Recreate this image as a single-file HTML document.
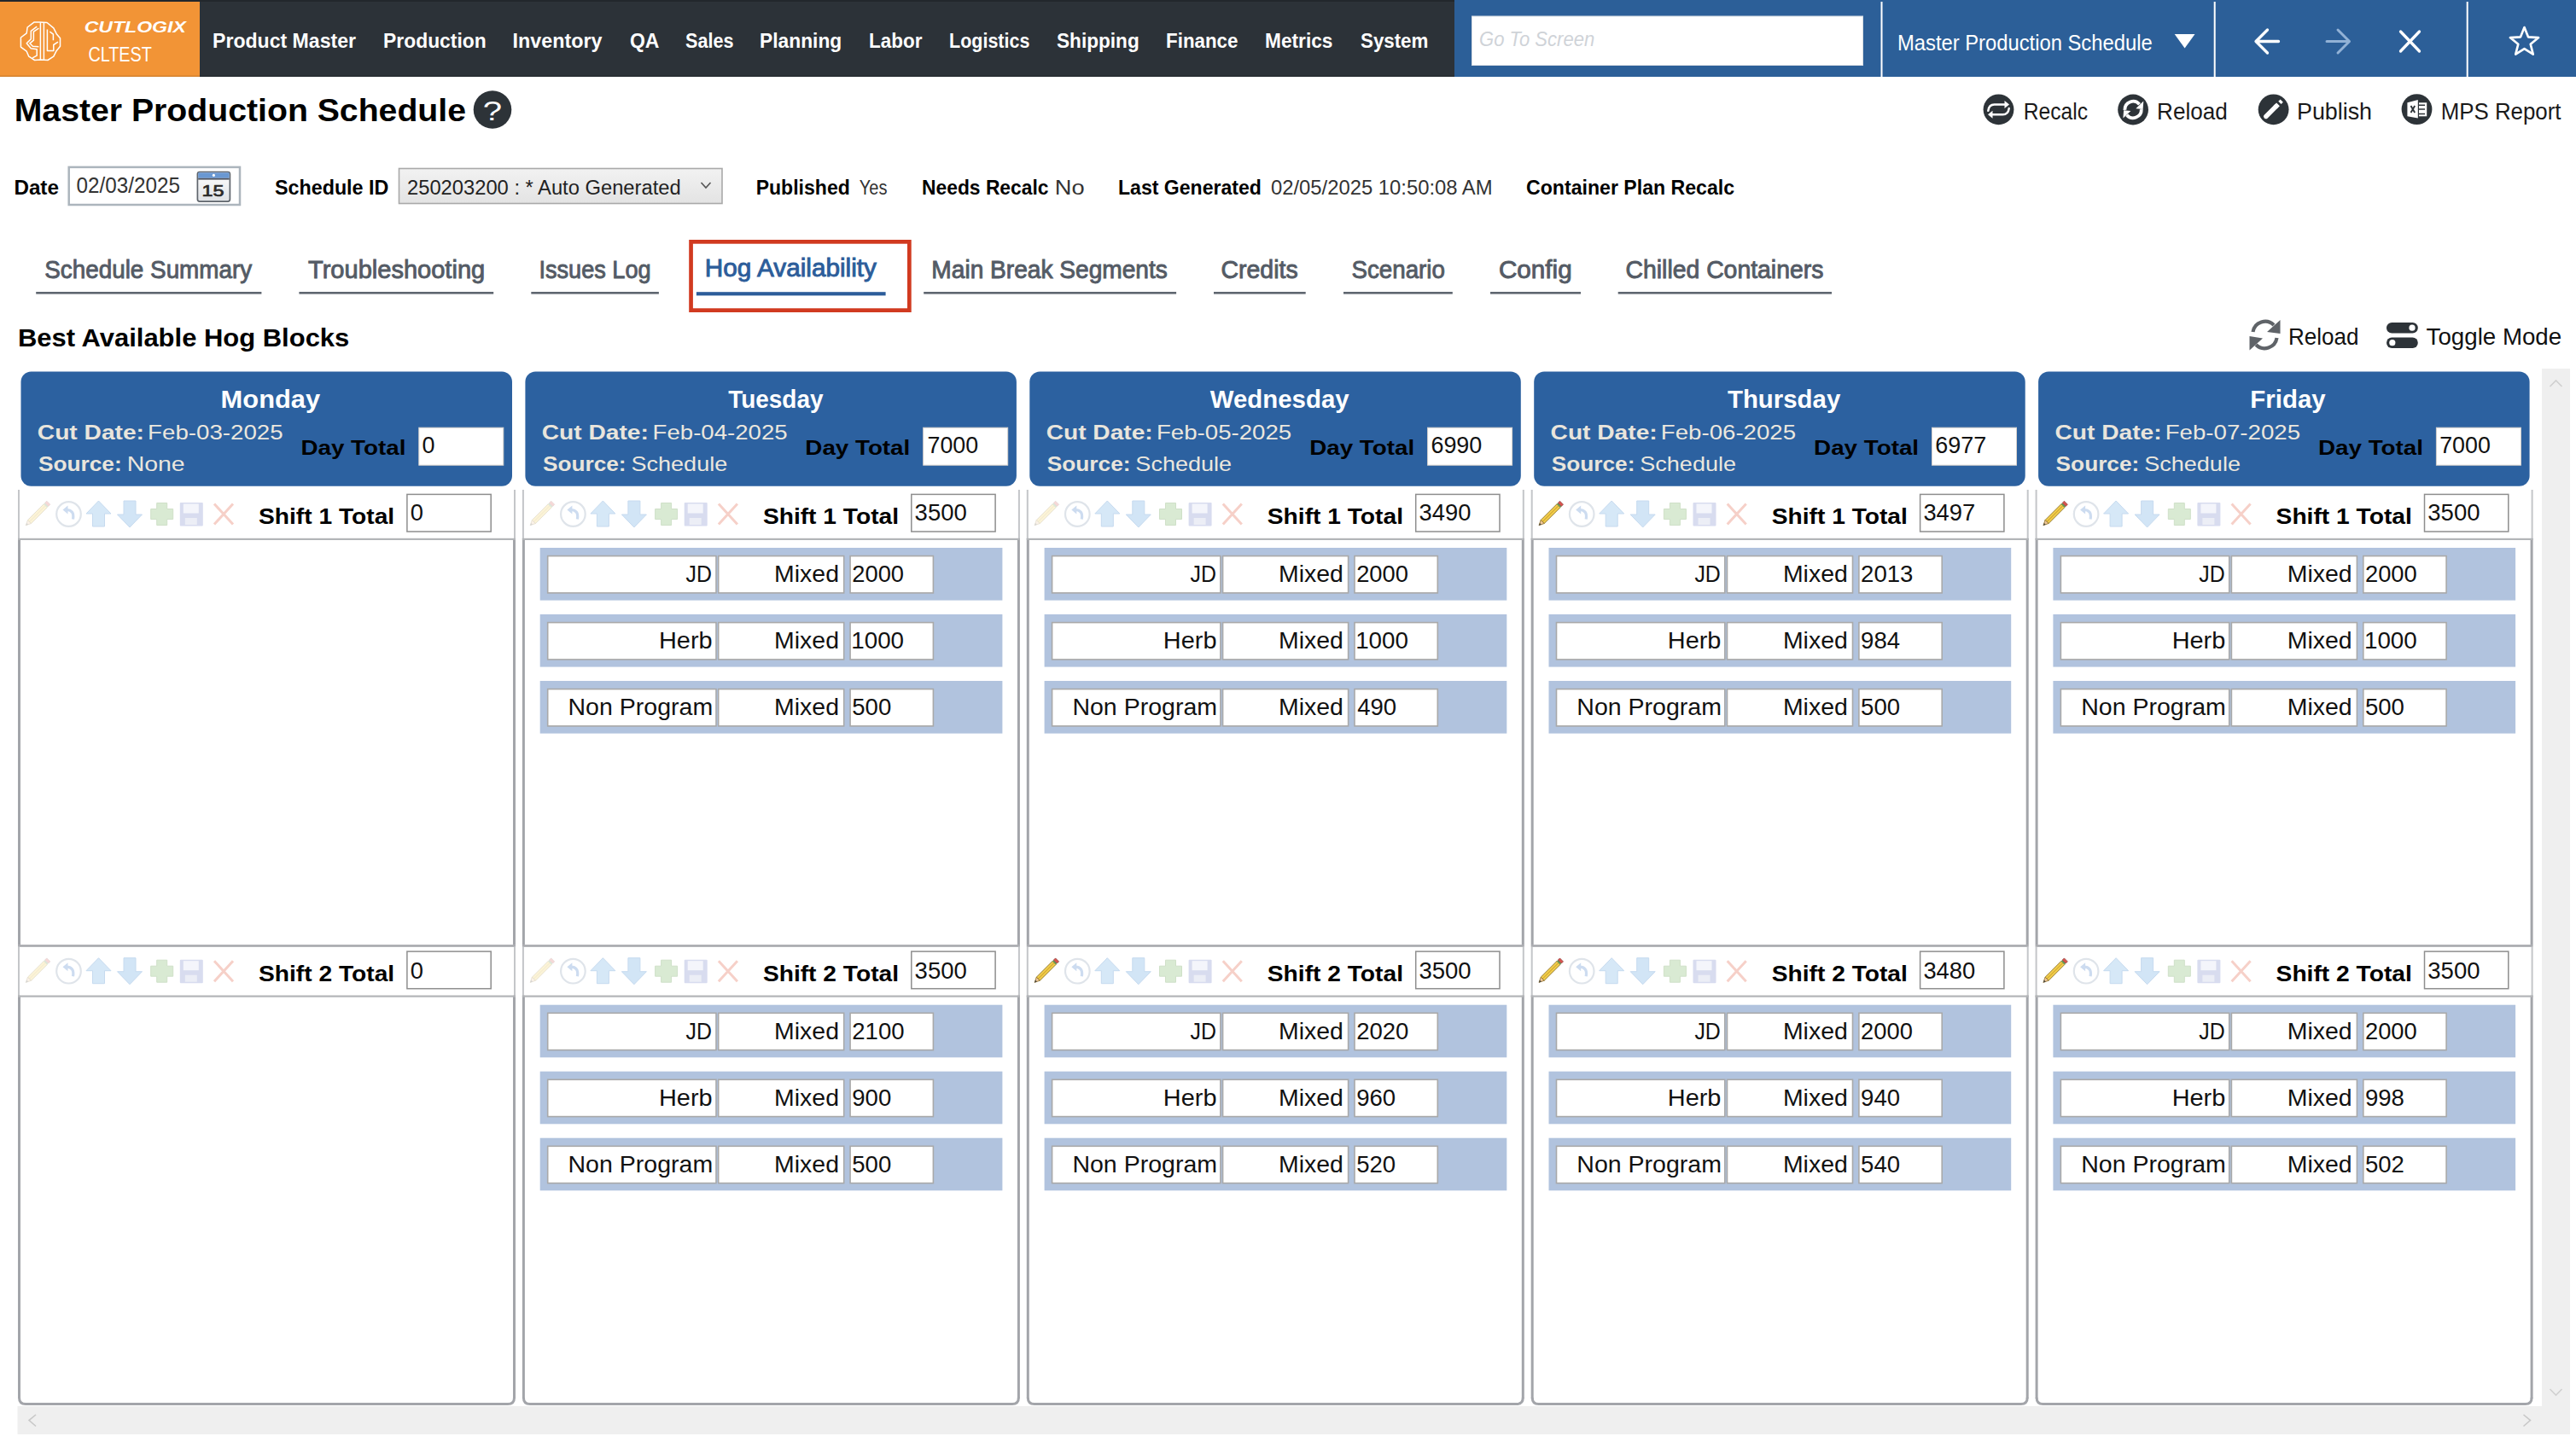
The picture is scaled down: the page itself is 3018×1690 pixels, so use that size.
<!DOCTYPE html>
<html><head><meta charset="utf-8"><title>Master Production Schedule</title>
<style>html,body{margin:0;padding:0;background:#fff;overflow:hidden}svg{display:block}text{font-family:"Liberation Sans",sans-serif;white-space:pre}</style>
</head><body>
<svg width="3018" height="1690" viewBox="0 0 3018 1690">
<rect width="3018" height="1690" fill="#fff"/>
<rect x="0" y="0" width="1704" height="90" fill="#2c3238"/>
<rect x="0" y="2" width="234" height="88" fill="#f29436"/>
<rect x="0" y="0" width="1704" height="2" fill="#22272c"/>
<rect x="0" y="88.5" width="3018" height="1.5" fill="#000" opacity="0.12"/>
<rect x="1704" y="0" width="1314" height="90" fill="#2c5f98"/>
<g fill="none" stroke="#fff" stroke-width="1.5" stroke-linejoin="round"><polygon points="39.8,26.1 46.6,26.1 55.1,26.5 62.8,32.9 66.2,39.7 70.5,44.8 70.5,54.2 66.2,59.4 62.8,66.2 56.0,70.5 47.4,70.0 40.6,70.5 33.8,66.2 31.2,60.2 24.4,55.1 24.4,44.0 31.2,38.9 32.1,32.0"/><polyline points="47.4,26.2 47.4,70.0"/><polyline points="51.4,26.5 51.4,70.0"/><polyline points="43.2,31.2 36.3,36.3 36.3,45.7 31.2,50.8 36.3,56.8 43.2,57.7 43.2,65.2 38.1,67.9"/><polyline points="45.4,33.2 39.4,37.2 39.4,47.2 34.9,50.8 38.4,54.2 45.4,54.7"/><polyline points="55.4,34.6 55.4,59.4 62.8,59.4 62.8,52.5 68.0,49.1"/><polyline points="58.4,37.2 62.4,40.2 62.4,47.2"/></g>
<rect x="1724.5" y="19" width="458" height="57.5" fill="#fff" stroke="#d8dde3" stroke-width="1"/>
<rect x="2203.5" y="2" width="2" height="88" fill="#fff"/>
<rect x="2593.7" y="2" width="2" height="88" fill="#fff"/>
<rect x="2889.7" y="2" width="2" height="88" fill="#fff"/>
<path d="M2547.7 40 L2571.5 40 L2559.6 56.5 Z" fill="#fff"/>
<g stroke="#fff" stroke-width="3.3" fill="none" stroke-linecap="round" stroke-linejoin="round"><path d="M2643 48.5 L2669.5 48.5 M2656.5 35 L2643 48.5 L2656.5 62"/></g>
<g stroke="#92b2d6" stroke-width="3" fill="none" stroke-linecap="round" stroke-linejoin="round"><path d="M2726 48.5 L2752.5 48.5 M2739 35 L2752.5 48.5 L2739 62"/></g>
<g stroke="#fff" stroke-width="3.3" fill="none" stroke-linecap="round"><path d="M2812.5 37 L2834.5 60 M2834.5 37 L2812.5 60"/></g>
<polygon points="2957.50,32.00 2961.97,43.35 2974.14,44.09 2964.73,51.85 2967.79,63.66 2957.50,57.10 2947.21,63.66 2950.27,51.85 2940.86,44.09 2953.03,43.35" fill="none" stroke="#fff" stroke-width="2.6" stroke-linejoin="round"/>
<circle cx="577" cy="128.5" r="22.3" fill="#2d3338"/>
<circle cx="2341.5" cy="128.3" r="17.9" fill="#2d3338"/><g fill="none" stroke="#fff" stroke-width="2.5" stroke-linecap="round"><path d="M2329.3 129.8 Q2330.3 122.60000000000001 2336.5 122.60000000000001 L2349.0 122.60000000000001"/><path d="M2353.7 127.10000000000001 Q2352.7 134.3 2346.5 134.3 L2334.0 134.3"/></g><path d="M2348.5 118.10000000000001 L2354.0 122.60000000000001 L2348.5 127.10000000000001 Z M2334.5 129.8 L2329.0 134.3 L2334.5 138.8 Z" fill="#fff"/>
<circle cx="2499.1" cy="128.5" r="17.9" fill="#2d3338"/><g fill="none" stroke="#fff" stroke-width="3.8"><path d="M2489.41 128.84 A9.7 9.7 0 0 1 2506.53 122.26"/><path d="M2508.79 128.16 A9.7 9.7 0 0 1 2491.67 134.74"/></g><path d="M2511.2999999999997 118.5 L2510.6 128.0 L2502.2999999999997 127.3 Z M2487.4 138.5 L2488.1 129.3 L2496.4 130.0 Z" fill="#fff"/>
<circle cx="2663.6" cy="128.3" r="17.9" fill="#2d3338"/><path d="M2654.7999999999997 136.5 L2666.6 124.70000000000002" stroke="#fff" stroke-width="5.4" stroke-linecap="round"/><path d="M2665.6 125.70000000000002 L2669.0 122.30000000000001" stroke="#fff" stroke-width="5.4" stroke-linecap="butt"/><path d="M2670.9 120.4 L2673.2 118.10000000000001" stroke="#fff" stroke-width="4.6" stroke-linecap="butt"/>
<circle cx="2831.5" cy="128.1" r="17.9" fill="#2d3338"/><path d="M2820.4 120.3 L2832.8 117.1 L2832.8 138.6 L2820.4 136.29999999999998 Z" fill="#fff"/><path d="M2824.5 124.1 L2829.2 132.1 M2829.2 124.1 L2824.5 132.1" stroke="#2d3338" stroke-width="1.9"/><rect x="2834.0" y="120.3" width="9.2" height="16" fill="#fff"/><path d="M2834.0 123.3 H2841.0 M2834.0 128.1 H2841.0 M2834.0 133.4 H2841.0" stroke="#2d3338" stroke-width="1.5"/>
<rect x="80.7" y="195.9" width="200.3" height="44.1" fill="#fff" stroke="#acb5bd" stroke-width="2.5"/>
<g><defs><linearGradient id="calg" x1="0" y1="0" x2="0" y2="1"><stop offset="0" stop-color="#ffffff"/><stop offset="1" stop-color="#dfe2e6"/></linearGradient></defs><rect x="231.4" y="201.5" width="38" height="34.6" rx="2.5" fill="url(#calg)" stroke="#5f656c" stroke-width="1.7"/>
<rect x="232.2" y="202.3" width="36.4" height="6.5" fill="#6a98d2"/>
<rect x="232.2" y="208.8" width="36.4" height="1.8" fill="#505560"/>
<circle cx="250.4" cy="205.4" r="1.6" fill="#fff"/></g>
<defs><linearGradient id="selg" x1="0" y1="0" x2="0" y2="1"><stop offset="0" stop-color="#f2f2f2"/><stop offset="1" stop-color="#e3e3e3"/></linearGradient></defs>
<rect x="467.5" y="197.5" width="378.5" height="41" fill="url(#selg)" stroke="#a9a9a9" stroke-width="1.6"/>
<path d="M821.5 214 L827 220 L832.5 214" fill="none" stroke="#555" stroke-width="1.6"/>
<rect x="42.2" y="342" width="264.2" height="2.6" fill="#5f6670"/>
<rect x="350.4" y="342" width="227.80000000000007" height="2.6" fill="#5f6670"/>
<rect x="622.3" y="342" width="149.60000000000002" height="2.6" fill="#5f6670"/>
<rect x="1082.2" y="342" width="295.89999999999986" height="2.6" fill="#5f6670"/>
<rect x="1422" y="342" width="107.70000000000005" height="2.6" fill="#5f6670"/>
<rect x="1574" y="342" width="127.79999999999995" height="2.6" fill="#5f6670"/>
<rect x="1746" y="342" width="106" height="2.6" fill="#5f6670"/>
<rect x="1895.7" y="342" width="250.29999999999995" height="2.6" fill="#5f6670"/>
<rect x="815.9" y="342.2" width="221.7" height="4.2" fill="#2c5d9a"/>
<rect x="809.55" y="283.35" width="255.8" height="80.3" fill="none" stroke="#d13a20" stroke-width="4.7"/>
<g fill="none" stroke="#5f6368" stroke-width="4.2">
<path d="M2639.5 389 A14.5 14.5 0 0 1 2664 381"/>
<path d="M2667.5 396 A14.5 14.5 0 0 1 2643 404"/></g>
<path d="M2671.5 375 L2671.5 391 L2656 389 Z M2635.5 410.5 L2635.5 394 L2651 396.5 Z" fill="#5f6368"/>
<rect x="2796" y="378" width="36.8" height="12.5" rx="6.25" fill="#2d3338"/>
<rect x="2796" y="395.5" width="36.8" height="12.5" rx="6.25" fill="#2d3338"/>
<circle cx="2826" cy="384.2" r="3.6" fill="#fff"/><circle cx="2802.8" cy="401.7" r="3.6" fill="#fff"/>
<rect x="20.5" y="1648" width="2990.5" height="33" fill="#efefef"/>
<rect x="2978" y="432" width="33" height="1249" fill="#efefef"/>
<path d="M42 1658 L34 1664.6 L42 1671.5" fill="none" stroke="#c8c8c8" stroke-width="1.6"/>
<path d="M2956.5 1658 L2964.5 1664.6 L2956.5 1671.5" fill="none" stroke="#c8c8c8" stroke-width="1.6"/>
<path d="M2987.5 453 L2994.5 446 L3001.5 453" fill="none" stroke="#d0d0d0" stroke-width="1.6"/>
<path d="M2987.5 1628 L2994.5 1635 L3001.5 1628" fill="none" stroke="#d0d0d0" stroke-width="1.6"/>
<rect x="24.5" y="435.5" width="575.5" height="134.2" rx="12" fill="#2c61a0"/>
<rect x="490.8" y="501.2" width="99" height="44" fill="#fff" stroke="#d8d2cc" stroke-width="1"/>
<rect x="21.0" y="574.0" width="2" height="58" fill="#c4c6c9"/>
<rect x="602.0" y="574.0" width="2" height="58" fill="#c4c6c9"/>
<g opacity="0.22" transform="translate(28.8,587.2)">
<path d="M7.7 26.3 L3.7 22.3 L22.5 3.5 L26.5 7.5 Z" fill="#f3cf4c" stroke="#8a6d22" stroke-width="0.9"/>
<path d="M5.7 24.3 L24.5 5.5" stroke="#d2a833" stroke-width="1.1"/>
<path d="M1.5 28.5 L3.7 22.3 L7.7 26.3 Z" fill="#efc79a" stroke="#8a6d22" stroke-width="0.8"/>
<path d="M1.5 28.5 L2.5 25.7 L4.3 27.5 Z" fill="#444"/>
<path d="M22.5 3.5 L26.5 7.5 L27.8 6.2 L23.8 2.2 Z" fill="#5e9a57"/>
<path d="M23.8 2.2 L27.8 6.2 L30 4 L26 0 Z" fill="#d8534d" stroke="#8a3a36" stroke-width="0.7"/>
</g><circle cx="80.5" cy="602.5" r="14.3" fill="none" stroke="#dfe4ea" stroke-width="2.2"/><path d="M73.5 597.5 L79.5 592.5 L79.5 602.5 Z" fill="#cddcf0"/><path d="M77.5 597.5 Q87.5 597.5 85.5 608.5" fill="none" stroke="#cddcf0" stroke-width="3.2"/><path d="M115.5 587.0 L130.0 602.0 L122.5 602.0 L122.5 617.0 L108.5 617.0 L108.5 602.0 L101.0 602.0 Z" fill="#d6e8f7" stroke="#c6daef" stroke-width="1"/><path d="M152.0 618.0 L166.5 603.0 L159.0 603.0 L159.0 587.0 L145.0 587.0 L145.0 603.0 L137.5 603.0 Z" fill="#d2e5f6" stroke="#c6daef" stroke-width="1"/><path d="M183.7 589.5 H195.7 V596.5 H202.7 V608.5 H195.7 V615.5 H183.7 V608.5 H176.7 V596.5 H183.7 Z" fill="#d9ead3" stroke="#cfe0c8" stroke-width="1"/><rect x="210.8" y="589.0" width="27" height="27.5" rx="1" fill="#d8dcef"/><rect x="214.8" y="590.5" width="18" height="11" fill="#f4f5fb"/><rect x="216.8" y="607.0" width="14" height="8" fill="#eceef6"/><path d="M251.0 590.5 L273.0 614.5 M273.0 590.5 L251.0 614.5" stroke="#f6d0c8" stroke-width="3"/>
<rect x="476.9" y="579.4" width="98.3" height="43.6" fill="#fff" stroke="#8e8e8e" stroke-width="1.5"/>
<path d="M22.5 631.0 V1107.5" stroke="#a3a5aa" stroke-width="3" fill="none"/>
<path d="M602.5 631.0 V1107.5" stroke="#a3a5aa" stroke-width="3" fill="none"/>
<rect x="21.0" y="630.8" width="583" height="2.2" fill="#b3b5b8"/>
<rect x="21.0" y="1107.2" width="583" height="2.6" fill="#a7a9ad"/>
<rect x="21.0" y="1109.7" width="2" height="58" fill="#c4c6c9"/>
<rect x="602.0" y="1109.7" width="2" height="58" fill="#c4c6c9"/>
<g opacity="0.22" transform="translate(28.8,1122.9)">
<path d="M7.7 26.3 L3.7 22.3 L22.5 3.5 L26.5 7.5 Z" fill="#f3cf4c" stroke="#8a6d22" stroke-width="0.9"/>
<path d="M5.7 24.3 L24.5 5.5" stroke="#d2a833" stroke-width="1.1"/>
<path d="M1.5 28.5 L3.7 22.3 L7.7 26.3 Z" fill="#efc79a" stroke="#8a6d22" stroke-width="0.8"/>
<path d="M1.5 28.5 L2.5 25.7 L4.3 27.5 Z" fill="#444"/>
<path d="M22.5 3.5 L26.5 7.5 L27.8 6.2 L23.8 2.2 Z" fill="#5e9a57"/>
<path d="M23.8 2.2 L27.8 6.2 L30 4 L26 0 Z" fill="#d8534d" stroke="#8a3a36" stroke-width="0.7"/>
</g><circle cx="80.5" cy="1138.2" r="14.3" fill="none" stroke="#dfe4ea" stroke-width="2.2"/><path d="M73.5 1133.2 L79.5 1128.2 L79.5 1138.2 Z" fill="#cddcf0"/><path d="M77.5 1133.2 Q87.5 1133.2 85.5 1144.2" fill="none" stroke="#cddcf0" stroke-width="3.2"/><path d="M115.5 1122.7 L130.0 1137.7 L122.5 1137.7 L122.5 1152.7 L108.5 1152.7 L108.5 1137.7 L101.0 1137.7 Z" fill="#d6e8f7" stroke="#c6daef" stroke-width="1"/><path d="M152.0 1153.7 L166.5 1138.7 L159.0 1138.7 L159.0 1122.7 L145.0 1122.7 L145.0 1138.7 L137.5 1138.7 Z" fill="#d2e5f6" stroke="#c6daef" stroke-width="1"/><path d="M183.7 1125.2 H195.7 V1132.2 H202.7 V1144.2 H195.7 V1151.2 H183.7 V1144.2 H176.7 V1132.2 H183.7 Z" fill="#d9ead3" stroke="#cfe0c8" stroke-width="1"/><rect x="210.8" y="1124.7" width="27" height="27.5" rx="1" fill="#d8dcef"/><rect x="214.8" y="1126.2" width="18" height="11" fill="#f4f5fb"/><rect x="216.8" y="1142.7" width="14" height="8" fill="#eceef6"/><path d="M251.0 1126.2 L273.0 1150.2 M273.0 1126.2 L251.0 1150.2" stroke="#f6d0c8" stroke-width="3"/>
<rect x="476.9" y="1115.1" width="98.3" height="43.6" fill="#fff" stroke="#8e8e8e" stroke-width="1.5"/>
<path d="M22.5 1166.7 V1639" stroke="#a3a5aa" stroke-width="3" fill="none"/>
<path d="M602.5 1166.7 V1639" stroke="#a3a5aa" stroke-width="3" fill="none"/>
<rect x="21.0" y="1166.5" width="583" height="2.2" fill="#b3b5b8"/>
<path d="M22.5 1638 Q22.5 1645.5 30.0 1645.5 H595.0 Q602.5 1645.5 602.5 1638" fill="none" stroke="#a3a5aa" stroke-width="3"/>
<rect x="615.4" y="435.5" width="575.5" height="134.2" rx="12" fill="#2c61a0"/>
<rect x="1081.7" y="501.2" width="99" height="44" fill="#fff" stroke="#d8d2cc" stroke-width="1"/>
<rect x="611.9" y="574.0" width="2" height="58" fill="#c4c6c9"/>
<rect x="1192.9" y="574.0" width="2" height="58" fill="#c4c6c9"/>
<g opacity="0.22" transform="translate(619.6999999999999,587.2)">
<path d="M7.7 26.3 L3.7 22.3 L22.5 3.5 L26.5 7.5 Z" fill="#f3cf4c" stroke="#8a6d22" stroke-width="0.9"/>
<path d="M5.7 24.3 L24.5 5.5" stroke="#d2a833" stroke-width="1.1"/>
<path d="M1.5 28.5 L3.7 22.3 L7.7 26.3 Z" fill="#efc79a" stroke="#8a6d22" stroke-width="0.8"/>
<path d="M1.5 28.5 L2.5 25.7 L4.3 27.5 Z" fill="#444"/>
<path d="M22.5 3.5 L26.5 7.5 L27.8 6.2 L23.8 2.2 Z" fill="#5e9a57"/>
<path d="M23.8 2.2 L27.8 6.2 L30 4 L26 0 Z" fill="#d8534d" stroke="#8a3a36" stroke-width="0.7"/>
</g><circle cx="671.4" cy="602.5" r="14.3" fill="none" stroke="#dfe4ea" stroke-width="2.2"/><path d="M664.4 597.5 L670.4 592.5 L670.4 602.5 Z" fill="#cddcf0"/><path d="M668.4 597.5 Q678.4 597.5 676.4 608.5" fill="none" stroke="#cddcf0" stroke-width="3.2"/><path d="M706.4 587.0 L720.9 602.0 L713.4 602.0 L713.4 617.0 L699.4 617.0 L699.4 602.0 L691.9 602.0 Z" fill="#d6e8f7" stroke="#c6daef" stroke-width="1"/><path d="M742.9 618.0 L757.4 603.0 L749.9 603.0 L749.9 587.0 L735.9 587.0 L735.9 603.0 L728.4 603.0 Z" fill="#d2e5f6" stroke="#c6daef" stroke-width="1"/><path d="M774.5999999999999 589.5 H786.5999999999999 V596.5 H793.5999999999999 V608.5 H786.5999999999999 V615.5 H774.5999999999999 V608.5 H767.5999999999999 V596.5 H774.5999999999999 Z" fill="#d9ead3" stroke="#cfe0c8" stroke-width="1"/><rect x="801.7" y="589.0" width="27" height="27.5" rx="1" fill="#d8dcef"/><rect x="805.7" y="590.5" width="18" height="11" fill="#f4f5fb"/><rect x="807.7" y="607.0" width="14" height="8" fill="#eceef6"/><path d="M841.9 590.5 L863.9 614.5 M863.9 590.5 L841.9 614.5" stroke="#f6d0c8" stroke-width="3"/>
<rect x="1067.8" y="579.4" width="98.3" height="43.6" fill="#fff" stroke="#8e8e8e" stroke-width="1.5"/>
<path d="M613.4 631.0 V1107.5" stroke="#a3a5aa" stroke-width="3" fill="none"/>
<path d="M1193.4 631.0 V1107.5" stroke="#a3a5aa" stroke-width="3" fill="none"/>
<rect x="611.9" y="630.8" width="583" height="2.2" fill="#b3b5b8"/>
<rect x="611.9" y="1107.2" width="583" height="2.6" fill="#a7a9ad"/>
<rect x="632.6999999999999" y="642.0" width="541.7" height="61.6" fill="#b1c3de"/>
<rect x="641.6999999999999" y="651.6" width="197.3" height="43.3" fill="#fff" stroke="#a9a9a9" stroke-width="1.6"/>
<rect x="841.7" y="651.6" width="147" height="43.3" fill="#fff" stroke="#a9a9a9" stroke-width="1.6"/>
<rect x="996.0999999999999" y="651.6" width="97.3" height="43.3" fill="#fff" stroke="#a9a9a9" stroke-width="1.6"/>
<rect x="632.6999999999999" y="720.0" width="541.7" height="61.6" fill="#b1c3de"/>
<rect x="641.6999999999999" y="729.6" width="197.3" height="43.3" fill="#fff" stroke="#a9a9a9" stroke-width="1.6"/>
<rect x="841.7" y="729.6" width="147" height="43.3" fill="#fff" stroke="#a9a9a9" stroke-width="1.6"/>
<rect x="996.0999999999999" y="729.6" width="97.3" height="43.3" fill="#fff" stroke="#a9a9a9" stroke-width="1.6"/>
<rect x="632.6999999999999" y="798.0" width="541.7" height="61.6" fill="#b1c3de"/>
<rect x="641.6999999999999" y="807.6" width="197.3" height="43.3" fill="#fff" stroke="#a9a9a9" stroke-width="1.6"/>
<rect x="841.7" y="807.6" width="147" height="43.3" fill="#fff" stroke="#a9a9a9" stroke-width="1.6"/>
<rect x="996.0999999999999" y="807.6" width="97.3" height="43.3" fill="#fff" stroke="#a9a9a9" stroke-width="1.6"/>
<rect x="611.9" y="1109.7" width="2" height="58" fill="#c4c6c9"/>
<rect x="1192.9" y="1109.7" width="2" height="58" fill="#c4c6c9"/>
<g opacity="0.22" transform="translate(619.6999999999999,1122.9)">
<path d="M7.7 26.3 L3.7 22.3 L22.5 3.5 L26.5 7.5 Z" fill="#f3cf4c" stroke="#8a6d22" stroke-width="0.9"/>
<path d="M5.7 24.3 L24.5 5.5" stroke="#d2a833" stroke-width="1.1"/>
<path d="M1.5 28.5 L3.7 22.3 L7.7 26.3 Z" fill="#efc79a" stroke="#8a6d22" stroke-width="0.8"/>
<path d="M1.5 28.5 L2.5 25.7 L4.3 27.5 Z" fill="#444"/>
<path d="M22.5 3.5 L26.5 7.5 L27.8 6.2 L23.8 2.2 Z" fill="#5e9a57"/>
<path d="M23.8 2.2 L27.8 6.2 L30 4 L26 0 Z" fill="#d8534d" stroke="#8a3a36" stroke-width="0.7"/>
</g><circle cx="671.4" cy="1138.2" r="14.3" fill="none" stroke="#dfe4ea" stroke-width="2.2"/><path d="M664.4 1133.2 L670.4 1128.2 L670.4 1138.2 Z" fill="#cddcf0"/><path d="M668.4 1133.2 Q678.4 1133.2 676.4 1144.2" fill="none" stroke="#cddcf0" stroke-width="3.2"/><path d="M706.4 1122.7 L720.9 1137.7 L713.4 1137.7 L713.4 1152.7 L699.4 1152.7 L699.4 1137.7 L691.9 1137.7 Z" fill="#d6e8f7" stroke="#c6daef" stroke-width="1"/><path d="M742.9 1153.7 L757.4 1138.7 L749.9 1138.7 L749.9 1122.7 L735.9 1122.7 L735.9 1138.7 L728.4 1138.7 Z" fill="#d2e5f6" stroke="#c6daef" stroke-width="1"/><path d="M774.5999999999999 1125.2 H786.5999999999999 V1132.2 H793.5999999999999 V1144.2 H786.5999999999999 V1151.2 H774.5999999999999 V1144.2 H767.5999999999999 V1132.2 H774.5999999999999 Z" fill="#d9ead3" stroke="#cfe0c8" stroke-width="1"/><rect x="801.7" y="1124.7" width="27" height="27.5" rx="1" fill="#d8dcef"/><rect x="805.7" y="1126.2" width="18" height="11" fill="#f4f5fb"/><rect x="807.7" y="1142.7" width="14" height="8" fill="#eceef6"/><path d="M841.9 1126.2 L863.9 1150.2 M863.9 1126.2 L841.9 1150.2" stroke="#f6d0c8" stroke-width="3"/>
<rect x="1067.8" y="1115.1" width="98.3" height="43.6" fill="#fff" stroke="#8e8e8e" stroke-width="1.5"/>
<path d="M613.4 1166.7 V1639" stroke="#a3a5aa" stroke-width="3" fill="none"/>
<path d="M1193.4 1166.7 V1639" stroke="#a3a5aa" stroke-width="3" fill="none"/>
<rect x="611.9" y="1166.5" width="583" height="2.2" fill="#b3b5b8"/>
<path d="M613.4 1638 Q613.4 1645.5 620.9 1645.5 H1185.9 Q1193.4 1645.5 1193.4 1638" fill="none" stroke="#a3a5aa" stroke-width="3"/>
<rect x="632.6999999999999" y="1177.7" width="541.7" height="61.6" fill="#b1c3de"/>
<rect x="641.6999999999999" y="1187.3" width="197.3" height="43.3" fill="#fff" stroke="#a9a9a9" stroke-width="1.6"/>
<rect x="841.7" y="1187.3" width="147" height="43.3" fill="#fff" stroke="#a9a9a9" stroke-width="1.6"/>
<rect x="996.0999999999999" y="1187.3" width="97.3" height="43.3" fill="#fff" stroke="#a9a9a9" stroke-width="1.6"/>
<rect x="632.6999999999999" y="1255.7" width="541.7" height="61.6" fill="#b1c3de"/>
<rect x="641.6999999999999" y="1265.3" width="197.3" height="43.3" fill="#fff" stroke="#a9a9a9" stroke-width="1.6"/>
<rect x="841.7" y="1265.3" width="147" height="43.3" fill="#fff" stroke="#a9a9a9" stroke-width="1.6"/>
<rect x="996.0999999999999" y="1265.3" width="97.3" height="43.3" fill="#fff" stroke="#a9a9a9" stroke-width="1.6"/>
<rect x="632.6999999999999" y="1333.7" width="541.7" height="61.6" fill="#b1c3de"/>
<rect x="641.6999999999999" y="1343.3" width="197.3" height="43.3" fill="#fff" stroke="#a9a9a9" stroke-width="1.6"/>
<rect x="841.7" y="1343.3" width="147" height="43.3" fill="#fff" stroke="#a9a9a9" stroke-width="1.6"/>
<rect x="996.0999999999999" y="1343.3" width="97.3" height="43.3" fill="#fff" stroke="#a9a9a9" stroke-width="1.6"/>
<rect x="1206.3" y="435.5" width="575.5" height="134.2" rx="12" fill="#2c61a0"/>
<rect x="1672.6" y="501.2" width="99" height="44" fill="#fff" stroke="#d8d2cc" stroke-width="1"/>
<rect x="1202.8" y="574.0" width="2" height="58" fill="#c4c6c9"/>
<rect x="1783.8" y="574.0" width="2" height="58" fill="#c4c6c9"/>
<g opacity="0.22" transform="translate(1210.6,587.2)">
<path d="M7.7 26.3 L3.7 22.3 L22.5 3.5 L26.5 7.5 Z" fill="#f3cf4c" stroke="#8a6d22" stroke-width="0.9"/>
<path d="M5.7 24.3 L24.5 5.5" stroke="#d2a833" stroke-width="1.1"/>
<path d="M1.5 28.5 L3.7 22.3 L7.7 26.3 Z" fill="#efc79a" stroke="#8a6d22" stroke-width="0.8"/>
<path d="M1.5 28.5 L2.5 25.7 L4.3 27.5 Z" fill="#444"/>
<path d="M22.5 3.5 L26.5 7.5 L27.8 6.2 L23.8 2.2 Z" fill="#5e9a57"/>
<path d="M23.8 2.2 L27.8 6.2 L30 4 L26 0 Z" fill="#d8534d" stroke="#8a3a36" stroke-width="0.7"/>
</g><circle cx="1262.3" cy="602.5" r="14.3" fill="none" stroke="#dfe4ea" stroke-width="2.2"/><path d="M1255.3 597.5 L1261.3 592.5 L1261.3 602.5 Z" fill="#cddcf0"/><path d="M1259.3 597.5 Q1269.3 597.5 1267.3 608.5" fill="none" stroke="#cddcf0" stroke-width="3.2"/><path d="M1297.3 587.0 L1311.8 602.0 L1304.3 602.0 L1304.3 617.0 L1290.3 617.0 L1290.3 602.0 L1282.8 602.0 Z" fill="#d6e8f7" stroke="#c6daef" stroke-width="1"/><path d="M1333.8 618.0 L1348.3 603.0 L1340.8 603.0 L1340.8 587.0 L1326.8 587.0 L1326.8 603.0 L1319.3 603.0 Z" fill="#d2e5f6" stroke="#c6daef" stroke-width="1"/><path d="M1365.5 589.5 H1377.5 V596.5 H1384.5 V608.5 H1377.5 V615.5 H1365.5 V608.5 H1358.5 V596.5 H1365.5 Z" fill="#d9ead3" stroke="#cfe0c8" stroke-width="1"/><rect x="1392.6" y="589.0" width="27" height="27.5" rx="1" fill="#d8dcef"/><rect x="1396.6" y="590.5" width="18" height="11" fill="#f4f5fb"/><rect x="1398.6" y="607.0" width="14" height="8" fill="#eceef6"/><path d="M1432.8 590.5 L1454.8 614.5 M1454.8 590.5 L1432.8 614.5" stroke="#f6d0c8" stroke-width="3"/>
<rect x="1658.6999999999998" y="579.4" width="98.3" height="43.6" fill="#fff" stroke="#8e8e8e" stroke-width="1.5"/>
<path d="M1204.3 631.0 V1107.5" stroke="#a3a5aa" stroke-width="3" fill="none"/>
<path d="M1784.3 631.0 V1107.5" stroke="#a3a5aa" stroke-width="3" fill="none"/>
<rect x="1202.8" y="630.8" width="583" height="2.2" fill="#b3b5b8"/>
<rect x="1202.8" y="1107.2" width="583" height="2.6" fill="#a7a9ad"/>
<rect x="1223.6" y="642.0" width="541.7" height="61.6" fill="#b1c3de"/>
<rect x="1232.6" y="651.6" width="197.3" height="43.3" fill="#fff" stroke="#a9a9a9" stroke-width="1.6"/>
<rect x="1432.6" y="651.6" width="147" height="43.3" fill="#fff" stroke="#a9a9a9" stroke-width="1.6"/>
<rect x="1587.0" y="651.6" width="97.3" height="43.3" fill="#fff" stroke="#a9a9a9" stroke-width="1.6"/>
<rect x="1223.6" y="720.0" width="541.7" height="61.6" fill="#b1c3de"/>
<rect x="1232.6" y="729.6" width="197.3" height="43.3" fill="#fff" stroke="#a9a9a9" stroke-width="1.6"/>
<rect x="1432.6" y="729.6" width="147" height="43.3" fill="#fff" stroke="#a9a9a9" stroke-width="1.6"/>
<rect x="1587.0" y="729.6" width="97.3" height="43.3" fill="#fff" stroke="#a9a9a9" stroke-width="1.6"/>
<rect x="1223.6" y="798.0" width="541.7" height="61.6" fill="#b1c3de"/>
<rect x="1232.6" y="807.6" width="197.3" height="43.3" fill="#fff" stroke="#a9a9a9" stroke-width="1.6"/>
<rect x="1432.6" y="807.6" width="147" height="43.3" fill="#fff" stroke="#a9a9a9" stroke-width="1.6"/>
<rect x="1587.0" y="807.6" width="97.3" height="43.3" fill="#fff" stroke="#a9a9a9" stroke-width="1.6"/>
<rect x="1202.8" y="1109.7" width="2" height="58" fill="#c4c6c9"/>
<rect x="1783.8" y="1109.7" width="2" height="58" fill="#c4c6c9"/>
<g opacity="1" transform="translate(1210.6,1122.9)">
<path d="M7.7 26.3 L3.7 22.3 L22.5 3.5 L26.5 7.5 Z" fill="#f3cf4c" stroke="#8a6d22" stroke-width="0.9"/>
<path d="M5.7 24.3 L24.5 5.5" stroke="#d2a833" stroke-width="1.1"/>
<path d="M1.5 28.5 L3.7 22.3 L7.7 26.3 Z" fill="#efc79a" stroke="#8a6d22" stroke-width="0.8"/>
<path d="M1.5 28.5 L2.5 25.7 L4.3 27.5 Z" fill="#444"/>
<path d="M22.5 3.5 L26.5 7.5 L27.8 6.2 L23.8 2.2 Z" fill="#5e9a57"/>
<path d="M23.8 2.2 L27.8 6.2 L30 4 L26 0 Z" fill="#d8534d" stroke="#8a3a36" stroke-width="0.7"/>
</g><circle cx="1262.3" cy="1138.2" r="14.3" fill="none" stroke="#dfe4ea" stroke-width="2.2"/><path d="M1255.3 1133.2 L1261.3 1128.2 L1261.3 1138.2 Z" fill="#cddcf0"/><path d="M1259.3 1133.2 Q1269.3 1133.2 1267.3 1144.2" fill="none" stroke="#cddcf0" stroke-width="3.2"/><path d="M1297.3 1122.7 L1311.8 1137.7 L1304.3 1137.7 L1304.3 1152.7 L1290.3 1152.7 L1290.3 1137.7 L1282.8 1137.7 Z" fill="#d6e8f7" stroke="#c6daef" stroke-width="1"/><path d="M1333.8 1153.7 L1348.3 1138.7 L1340.8 1138.7 L1340.8 1122.7 L1326.8 1122.7 L1326.8 1138.7 L1319.3 1138.7 Z" fill="#d2e5f6" stroke="#c6daef" stroke-width="1"/><path d="M1365.5 1125.2 H1377.5 V1132.2 H1384.5 V1144.2 H1377.5 V1151.2 H1365.5 V1144.2 H1358.5 V1132.2 H1365.5 Z" fill="#d9ead3" stroke="#cfe0c8" stroke-width="1"/><rect x="1392.6" y="1124.7" width="27" height="27.5" rx="1" fill="#d8dcef"/><rect x="1396.6" y="1126.2" width="18" height="11" fill="#f4f5fb"/><rect x="1398.6" y="1142.7" width="14" height="8" fill="#eceef6"/><path d="M1432.8 1126.2 L1454.8 1150.2 M1454.8 1126.2 L1432.8 1150.2" stroke="#f6d0c8" stroke-width="3"/>
<rect x="1658.6999999999998" y="1115.1" width="98.3" height="43.6" fill="#fff" stroke="#8e8e8e" stroke-width="1.5"/>
<path d="M1204.3 1166.7 V1639" stroke="#a3a5aa" stroke-width="3" fill="none"/>
<path d="M1784.3 1166.7 V1639" stroke="#a3a5aa" stroke-width="3" fill="none"/>
<rect x="1202.8" y="1166.5" width="583" height="2.2" fill="#b3b5b8"/>
<path d="M1204.3 1638 Q1204.3 1645.5 1211.8 1645.5 H1776.8 Q1784.3 1645.5 1784.3 1638" fill="none" stroke="#a3a5aa" stroke-width="3"/>
<rect x="1223.6" y="1177.7" width="541.7" height="61.6" fill="#b1c3de"/>
<rect x="1232.6" y="1187.3" width="197.3" height="43.3" fill="#fff" stroke="#a9a9a9" stroke-width="1.6"/>
<rect x="1432.6" y="1187.3" width="147" height="43.3" fill="#fff" stroke="#a9a9a9" stroke-width="1.6"/>
<rect x="1587.0" y="1187.3" width="97.3" height="43.3" fill="#fff" stroke="#a9a9a9" stroke-width="1.6"/>
<rect x="1223.6" y="1255.7" width="541.7" height="61.6" fill="#b1c3de"/>
<rect x="1232.6" y="1265.3" width="197.3" height="43.3" fill="#fff" stroke="#a9a9a9" stroke-width="1.6"/>
<rect x="1432.6" y="1265.3" width="147" height="43.3" fill="#fff" stroke="#a9a9a9" stroke-width="1.6"/>
<rect x="1587.0" y="1265.3" width="97.3" height="43.3" fill="#fff" stroke="#a9a9a9" stroke-width="1.6"/>
<rect x="1223.6" y="1333.7" width="541.7" height="61.6" fill="#b1c3de"/>
<rect x="1232.6" y="1343.3" width="197.3" height="43.3" fill="#fff" stroke="#a9a9a9" stroke-width="1.6"/>
<rect x="1432.6" y="1343.3" width="147" height="43.3" fill="#fff" stroke="#a9a9a9" stroke-width="1.6"/>
<rect x="1587.0" y="1343.3" width="97.3" height="43.3" fill="#fff" stroke="#a9a9a9" stroke-width="1.6"/>
<rect x="1797.1999999999998" y="435.5" width="575.5" height="134.2" rx="12" fill="#2c61a0"/>
<rect x="2263.5" y="501.2" width="99" height="44" fill="#fff" stroke="#d8d2cc" stroke-width="1"/>
<rect x="1793.6999999999998" y="574.0" width="2" height="58" fill="#c4c6c9"/>
<rect x="2374.7" y="574.0" width="2" height="58" fill="#c4c6c9"/>
<g opacity="1" transform="translate(1801.4999999999998,587.2)">
<path d="M7.7 26.3 L3.7 22.3 L22.5 3.5 L26.5 7.5 Z" fill="#f3cf4c" stroke="#8a6d22" stroke-width="0.9"/>
<path d="M5.7 24.3 L24.5 5.5" stroke="#d2a833" stroke-width="1.1"/>
<path d="M1.5 28.5 L3.7 22.3 L7.7 26.3 Z" fill="#efc79a" stroke="#8a6d22" stroke-width="0.8"/>
<path d="M1.5 28.5 L2.5 25.7 L4.3 27.5 Z" fill="#444"/>
<path d="M22.5 3.5 L26.5 7.5 L27.8 6.2 L23.8 2.2 Z" fill="#5e9a57"/>
<path d="M23.8 2.2 L27.8 6.2 L30 4 L26 0 Z" fill="#d8534d" stroke="#8a3a36" stroke-width="0.7"/>
</g><circle cx="1853.1999999999998" cy="602.5" r="14.3" fill="none" stroke="#dfe4ea" stroke-width="2.2"/><path d="M1846.1999999999998 597.5 L1852.1999999999998 592.5 L1852.1999999999998 602.5 Z" fill="#cddcf0"/><path d="M1850.1999999999998 597.5 Q1860.1999999999998 597.5 1858.1999999999998 608.5" fill="none" stroke="#cddcf0" stroke-width="3.2"/><path d="M1888.1999999999998 587.0 L1902.6999999999998 602.0 L1895.1999999999998 602.0 L1895.1999999999998 617.0 L1881.1999999999998 617.0 L1881.1999999999998 602.0 L1873.6999999999998 602.0 Z" fill="#d6e8f7" stroke="#c6daef" stroke-width="1"/><path d="M1924.6999999999998 618.0 L1939.1999999999998 603.0 L1931.6999999999998 603.0 L1931.6999999999998 587.0 L1917.6999999999998 587.0 L1917.6999999999998 603.0 L1910.1999999999998 603.0 Z" fill="#d2e5f6" stroke="#c6daef" stroke-width="1"/><path d="M1956.3999999999999 589.5 H1968.3999999999999 V596.5 H1975.3999999999999 V608.5 H1968.3999999999999 V615.5 H1956.3999999999999 V608.5 H1949.3999999999999 V596.5 H1956.3999999999999 Z" fill="#d9ead3" stroke="#cfe0c8" stroke-width="1"/><rect x="1983.4999999999998" y="589.0" width="27" height="27.5" rx="1" fill="#d8dcef"/><rect x="1987.4999999999998" y="590.5" width="18" height="11" fill="#f4f5fb"/><rect x="1989.4999999999998" y="607.0" width="14" height="8" fill="#eceef6"/><path d="M2023.6999999999998 590.5 L2045.6999999999998 614.5 M2045.6999999999998 590.5 L2023.6999999999998 614.5" stroke="#f6d0c8" stroke-width="3"/>
<rect x="2249.6" y="579.4" width="98.3" height="43.6" fill="#fff" stroke="#8e8e8e" stroke-width="1.5"/>
<path d="M1795.1999999999998 631.0 V1107.5" stroke="#a3a5aa" stroke-width="3" fill="none"/>
<path d="M2375.2 631.0 V1107.5" stroke="#a3a5aa" stroke-width="3" fill="none"/>
<rect x="1793.6999999999998" y="630.8" width="583" height="2.2" fill="#b3b5b8"/>
<rect x="1793.6999999999998" y="1107.2" width="583" height="2.6" fill="#a7a9ad"/>
<rect x="1814.4999999999998" y="642.0" width="541.7" height="61.6" fill="#b1c3de"/>
<rect x="1823.4999999999998" y="651.6" width="197.3" height="43.3" fill="#fff" stroke="#a9a9a9" stroke-width="1.6"/>
<rect x="2023.4999999999998" y="651.6" width="147" height="43.3" fill="#fff" stroke="#a9a9a9" stroke-width="1.6"/>
<rect x="2177.8999999999996" y="651.6" width="97.3" height="43.3" fill="#fff" stroke="#a9a9a9" stroke-width="1.6"/>
<rect x="1814.4999999999998" y="720.0" width="541.7" height="61.6" fill="#b1c3de"/>
<rect x="1823.4999999999998" y="729.6" width="197.3" height="43.3" fill="#fff" stroke="#a9a9a9" stroke-width="1.6"/>
<rect x="2023.4999999999998" y="729.6" width="147" height="43.3" fill="#fff" stroke="#a9a9a9" stroke-width="1.6"/>
<rect x="2177.8999999999996" y="729.6" width="97.3" height="43.3" fill="#fff" stroke="#a9a9a9" stroke-width="1.6"/>
<rect x="1814.4999999999998" y="798.0" width="541.7" height="61.6" fill="#b1c3de"/>
<rect x="1823.4999999999998" y="807.6" width="197.3" height="43.3" fill="#fff" stroke="#a9a9a9" stroke-width="1.6"/>
<rect x="2023.4999999999998" y="807.6" width="147" height="43.3" fill="#fff" stroke="#a9a9a9" stroke-width="1.6"/>
<rect x="2177.8999999999996" y="807.6" width="97.3" height="43.3" fill="#fff" stroke="#a9a9a9" stroke-width="1.6"/>
<rect x="1793.6999999999998" y="1109.7" width="2" height="58" fill="#c4c6c9"/>
<rect x="2374.7" y="1109.7" width="2" height="58" fill="#c4c6c9"/>
<g opacity="1" transform="translate(1801.4999999999998,1122.9)">
<path d="M7.7 26.3 L3.7 22.3 L22.5 3.5 L26.5 7.5 Z" fill="#f3cf4c" stroke="#8a6d22" stroke-width="0.9"/>
<path d="M5.7 24.3 L24.5 5.5" stroke="#d2a833" stroke-width="1.1"/>
<path d="M1.5 28.5 L3.7 22.3 L7.7 26.3 Z" fill="#efc79a" stroke="#8a6d22" stroke-width="0.8"/>
<path d="M1.5 28.5 L2.5 25.7 L4.3 27.5 Z" fill="#444"/>
<path d="M22.5 3.5 L26.5 7.5 L27.8 6.2 L23.8 2.2 Z" fill="#5e9a57"/>
<path d="M23.8 2.2 L27.8 6.2 L30 4 L26 0 Z" fill="#d8534d" stroke="#8a3a36" stroke-width="0.7"/>
</g><circle cx="1853.1999999999998" cy="1138.2" r="14.3" fill="none" stroke="#dfe4ea" stroke-width="2.2"/><path d="M1846.1999999999998 1133.2 L1852.1999999999998 1128.2 L1852.1999999999998 1138.2 Z" fill="#cddcf0"/><path d="M1850.1999999999998 1133.2 Q1860.1999999999998 1133.2 1858.1999999999998 1144.2" fill="none" stroke="#cddcf0" stroke-width="3.2"/><path d="M1888.1999999999998 1122.7 L1902.6999999999998 1137.7 L1895.1999999999998 1137.7 L1895.1999999999998 1152.7 L1881.1999999999998 1152.7 L1881.1999999999998 1137.7 L1873.6999999999998 1137.7 Z" fill="#d6e8f7" stroke="#c6daef" stroke-width="1"/><path d="M1924.6999999999998 1153.7 L1939.1999999999998 1138.7 L1931.6999999999998 1138.7 L1931.6999999999998 1122.7 L1917.6999999999998 1122.7 L1917.6999999999998 1138.7 L1910.1999999999998 1138.7 Z" fill="#d2e5f6" stroke="#c6daef" stroke-width="1"/><path d="M1956.3999999999999 1125.2 H1968.3999999999999 V1132.2 H1975.3999999999999 V1144.2 H1968.3999999999999 V1151.2 H1956.3999999999999 V1144.2 H1949.3999999999999 V1132.2 H1956.3999999999999 Z" fill="#d9ead3" stroke="#cfe0c8" stroke-width="1"/><rect x="1983.4999999999998" y="1124.7" width="27" height="27.5" rx="1" fill="#d8dcef"/><rect x="1987.4999999999998" y="1126.2" width="18" height="11" fill="#f4f5fb"/><rect x="1989.4999999999998" y="1142.7" width="14" height="8" fill="#eceef6"/><path d="M2023.6999999999998 1126.2 L2045.6999999999998 1150.2 M2045.6999999999998 1126.2 L2023.6999999999998 1150.2" stroke="#f6d0c8" stroke-width="3"/>
<rect x="2249.6" y="1115.1" width="98.3" height="43.6" fill="#fff" stroke="#8e8e8e" stroke-width="1.5"/>
<path d="M1795.1999999999998 1166.7 V1639" stroke="#a3a5aa" stroke-width="3" fill="none"/>
<path d="M2375.2 1166.7 V1639" stroke="#a3a5aa" stroke-width="3" fill="none"/>
<rect x="1793.6999999999998" y="1166.5" width="583" height="2.2" fill="#b3b5b8"/>
<path d="M1795.1999999999998 1638 Q1795.1999999999998 1645.5 1802.6999999999998 1645.5 H2367.7 Q2375.2 1645.5 2375.2 1638" fill="none" stroke="#a3a5aa" stroke-width="3"/>
<rect x="1814.4999999999998" y="1177.7" width="541.7" height="61.6" fill="#b1c3de"/>
<rect x="1823.4999999999998" y="1187.3" width="197.3" height="43.3" fill="#fff" stroke="#a9a9a9" stroke-width="1.6"/>
<rect x="2023.4999999999998" y="1187.3" width="147" height="43.3" fill="#fff" stroke="#a9a9a9" stroke-width="1.6"/>
<rect x="2177.8999999999996" y="1187.3" width="97.3" height="43.3" fill="#fff" stroke="#a9a9a9" stroke-width="1.6"/>
<rect x="1814.4999999999998" y="1255.7" width="541.7" height="61.6" fill="#b1c3de"/>
<rect x="1823.4999999999998" y="1265.3" width="197.3" height="43.3" fill="#fff" stroke="#a9a9a9" stroke-width="1.6"/>
<rect x="2023.4999999999998" y="1265.3" width="147" height="43.3" fill="#fff" stroke="#a9a9a9" stroke-width="1.6"/>
<rect x="2177.8999999999996" y="1265.3" width="97.3" height="43.3" fill="#fff" stroke="#a9a9a9" stroke-width="1.6"/>
<rect x="1814.4999999999998" y="1333.7" width="541.7" height="61.6" fill="#b1c3de"/>
<rect x="1823.4999999999998" y="1343.3" width="197.3" height="43.3" fill="#fff" stroke="#a9a9a9" stroke-width="1.6"/>
<rect x="2023.4999999999998" y="1343.3" width="147" height="43.3" fill="#fff" stroke="#a9a9a9" stroke-width="1.6"/>
<rect x="2177.8999999999996" y="1343.3" width="97.3" height="43.3" fill="#fff" stroke="#a9a9a9" stroke-width="1.6"/>
<rect x="2388.1" y="435.5" width="575.5" height="134.2" rx="12" fill="#2c61a0"/>
<rect x="2854.4" y="501.2" width="99" height="44" fill="#fff" stroke="#d8d2cc" stroke-width="1"/>
<rect x="2384.6" y="574.0" width="2" height="58" fill="#c4c6c9"/>
<rect x="2965.6" y="574.0" width="2" height="58" fill="#c4c6c9"/>
<g opacity="1" transform="translate(2392.4,587.2)">
<path d="M7.7 26.3 L3.7 22.3 L22.5 3.5 L26.5 7.5 Z" fill="#f3cf4c" stroke="#8a6d22" stroke-width="0.9"/>
<path d="M5.7 24.3 L24.5 5.5" stroke="#d2a833" stroke-width="1.1"/>
<path d="M1.5 28.5 L3.7 22.3 L7.7 26.3 Z" fill="#efc79a" stroke="#8a6d22" stroke-width="0.8"/>
<path d="M1.5 28.5 L2.5 25.7 L4.3 27.5 Z" fill="#444"/>
<path d="M22.5 3.5 L26.5 7.5 L27.8 6.2 L23.8 2.2 Z" fill="#5e9a57"/>
<path d="M23.8 2.2 L27.8 6.2 L30 4 L26 0 Z" fill="#d8534d" stroke="#8a3a36" stroke-width="0.7"/>
</g><circle cx="2444.1" cy="602.5" r="14.3" fill="none" stroke="#dfe4ea" stroke-width="2.2"/><path d="M2437.1 597.5 L2443.1 592.5 L2443.1 602.5 Z" fill="#cddcf0"/><path d="M2441.1 597.5 Q2451.1 597.5 2449.1 608.5" fill="none" stroke="#cddcf0" stroke-width="3.2"/><path d="M2479.1 587.0 L2493.6 602.0 L2486.1 602.0 L2486.1 617.0 L2472.1 617.0 L2472.1 602.0 L2464.6 602.0 Z" fill="#d6e8f7" stroke="#c6daef" stroke-width="1"/><path d="M2515.6 618.0 L2530.1 603.0 L2522.6 603.0 L2522.6 587.0 L2508.6 587.0 L2508.6 603.0 L2501.1 603.0 Z" fill="#d2e5f6" stroke="#c6daef" stroke-width="1"/><path d="M2547.2999999999997 589.5 H2559.2999999999997 V596.5 H2566.2999999999997 V608.5 H2559.2999999999997 V615.5 H2547.2999999999997 V608.5 H2540.2999999999997 V596.5 H2547.2999999999997 Z" fill="#d9ead3" stroke="#cfe0c8" stroke-width="1"/><rect x="2574.4" y="589.0" width="27" height="27.5" rx="1" fill="#d8dcef"/><rect x="2578.4" y="590.5" width="18" height="11" fill="#f4f5fb"/><rect x="2580.4" y="607.0" width="14" height="8" fill="#eceef6"/><path d="M2614.6 590.5 L2636.6 614.5 M2636.6 590.5 L2614.6 614.5" stroke="#f6d0c8" stroke-width="3"/>
<rect x="2840.5" y="579.4" width="98.3" height="43.6" fill="#fff" stroke="#8e8e8e" stroke-width="1.5"/>
<path d="M2386.1 631.0 V1107.5" stroke="#a3a5aa" stroke-width="3" fill="none"/>
<path d="M2966.1 631.0 V1107.5" stroke="#a3a5aa" stroke-width="3" fill="none"/>
<rect x="2384.6" y="630.8" width="583" height="2.2" fill="#b3b5b8"/>
<rect x="2384.6" y="1107.2" width="583" height="2.6" fill="#a7a9ad"/>
<rect x="2405.4" y="642.0" width="541.7" height="61.6" fill="#b1c3de"/>
<rect x="2414.4" y="651.6" width="197.3" height="43.3" fill="#fff" stroke="#a9a9a9" stroke-width="1.6"/>
<rect x="2614.4" y="651.6" width="147" height="43.3" fill="#fff" stroke="#a9a9a9" stroke-width="1.6"/>
<rect x="2768.7999999999997" y="651.6" width="97.3" height="43.3" fill="#fff" stroke="#a9a9a9" stroke-width="1.6"/>
<rect x="2405.4" y="720.0" width="541.7" height="61.6" fill="#b1c3de"/>
<rect x="2414.4" y="729.6" width="197.3" height="43.3" fill="#fff" stroke="#a9a9a9" stroke-width="1.6"/>
<rect x="2614.4" y="729.6" width="147" height="43.3" fill="#fff" stroke="#a9a9a9" stroke-width="1.6"/>
<rect x="2768.7999999999997" y="729.6" width="97.3" height="43.3" fill="#fff" stroke="#a9a9a9" stroke-width="1.6"/>
<rect x="2405.4" y="798.0" width="541.7" height="61.6" fill="#b1c3de"/>
<rect x="2414.4" y="807.6" width="197.3" height="43.3" fill="#fff" stroke="#a9a9a9" stroke-width="1.6"/>
<rect x="2614.4" y="807.6" width="147" height="43.3" fill="#fff" stroke="#a9a9a9" stroke-width="1.6"/>
<rect x="2768.7999999999997" y="807.6" width="97.3" height="43.3" fill="#fff" stroke="#a9a9a9" stroke-width="1.6"/>
<rect x="2384.6" y="1109.7" width="2" height="58" fill="#c4c6c9"/>
<rect x="2965.6" y="1109.7" width="2" height="58" fill="#c4c6c9"/>
<g opacity="1" transform="translate(2392.4,1122.9)">
<path d="M7.7 26.3 L3.7 22.3 L22.5 3.5 L26.5 7.5 Z" fill="#f3cf4c" stroke="#8a6d22" stroke-width="0.9"/>
<path d="M5.7 24.3 L24.5 5.5" stroke="#d2a833" stroke-width="1.1"/>
<path d="M1.5 28.5 L3.7 22.3 L7.7 26.3 Z" fill="#efc79a" stroke="#8a6d22" stroke-width="0.8"/>
<path d="M1.5 28.5 L2.5 25.7 L4.3 27.5 Z" fill="#444"/>
<path d="M22.5 3.5 L26.5 7.5 L27.8 6.2 L23.8 2.2 Z" fill="#5e9a57"/>
<path d="M23.8 2.2 L27.8 6.2 L30 4 L26 0 Z" fill="#d8534d" stroke="#8a3a36" stroke-width="0.7"/>
</g><circle cx="2444.1" cy="1138.2" r="14.3" fill="none" stroke="#dfe4ea" stroke-width="2.2"/><path d="M2437.1 1133.2 L2443.1 1128.2 L2443.1 1138.2 Z" fill="#cddcf0"/><path d="M2441.1 1133.2 Q2451.1 1133.2 2449.1 1144.2" fill="none" stroke="#cddcf0" stroke-width="3.2"/><path d="M2479.1 1122.7 L2493.6 1137.7 L2486.1 1137.7 L2486.1 1152.7 L2472.1 1152.7 L2472.1 1137.7 L2464.6 1137.7 Z" fill="#d6e8f7" stroke="#c6daef" stroke-width="1"/><path d="M2515.6 1153.7 L2530.1 1138.7 L2522.6 1138.7 L2522.6 1122.7 L2508.6 1122.7 L2508.6 1138.7 L2501.1 1138.7 Z" fill="#d2e5f6" stroke="#c6daef" stroke-width="1"/><path d="M2547.2999999999997 1125.2 H2559.2999999999997 V1132.2 H2566.2999999999997 V1144.2 H2559.2999999999997 V1151.2 H2547.2999999999997 V1144.2 H2540.2999999999997 V1132.2 H2547.2999999999997 Z" fill="#d9ead3" stroke="#cfe0c8" stroke-width="1"/><rect x="2574.4" y="1124.7" width="27" height="27.5" rx="1" fill="#d8dcef"/><rect x="2578.4" y="1126.2" width="18" height="11" fill="#f4f5fb"/><rect x="2580.4" y="1142.7" width="14" height="8" fill="#eceef6"/><path d="M2614.6 1126.2 L2636.6 1150.2 M2636.6 1126.2 L2614.6 1150.2" stroke="#f6d0c8" stroke-width="3"/>
<rect x="2840.5" y="1115.1" width="98.3" height="43.6" fill="#fff" stroke="#8e8e8e" stroke-width="1.5"/>
<path d="M2386.1 1166.7 V1639" stroke="#a3a5aa" stroke-width="3" fill="none"/>
<path d="M2966.1 1166.7 V1639" stroke="#a3a5aa" stroke-width="3" fill="none"/>
<rect x="2384.6" y="1166.5" width="583" height="2.2" fill="#b3b5b8"/>
<path d="M2386.1 1638 Q2386.1 1645.5 2393.6 1645.5 H2958.6 Q2966.1 1645.5 2966.1 1638" fill="none" stroke="#a3a5aa" stroke-width="3"/>
<rect x="2405.4" y="1177.7" width="541.7" height="61.6" fill="#b1c3de"/>
<rect x="2414.4" y="1187.3" width="197.3" height="43.3" fill="#fff" stroke="#a9a9a9" stroke-width="1.6"/>
<rect x="2614.4" y="1187.3" width="147" height="43.3" fill="#fff" stroke="#a9a9a9" stroke-width="1.6"/>
<rect x="2768.7999999999997" y="1187.3" width="97.3" height="43.3" fill="#fff" stroke="#a9a9a9" stroke-width="1.6"/>
<rect x="2405.4" y="1255.7" width="541.7" height="61.6" fill="#b1c3de"/>
<rect x="2414.4" y="1265.3" width="197.3" height="43.3" fill="#fff" stroke="#a9a9a9" stroke-width="1.6"/>
<rect x="2614.4" y="1265.3" width="147" height="43.3" fill="#fff" stroke="#a9a9a9" stroke-width="1.6"/>
<rect x="2768.7999999999997" y="1265.3" width="97.3" height="43.3" fill="#fff" stroke="#a9a9a9" stroke-width="1.6"/>
<rect x="2405.4" y="1333.7" width="541.7" height="61.6" fill="#b1c3de"/>
<rect x="2414.4" y="1343.3" width="197.3" height="43.3" fill="#fff" stroke="#a9a9a9" stroke-width="1.6"/>
<rect x="2614.4" y="1343.3" width="147" height="43.3" fill="#fff" stroke="#a9a9a9" stroke-width="1.6"/>
<rect x="2768.7999999999997" y="1343.3" width="97.3" height="43.3" fill="#fff" stroke="#a9a9a9" stroke-width="1.6"/>
<text x="98.70" y="38.00" font-size="18.16" font-weight="bold" font-style="italic" fill="#fff" textLength="119.16" lengthAdjust="spacingAndGlyphs">CUTLOGIX</text>
<text x="103.39" y="71.80" font-size="24.44" fill="#fff" textLength="74.55" lengthAdjust="spacingAndGlyphs">CLTEST</text>
<text x="249.04" y="56.00" font-size="24.16" font-weight="bold" fill="#fff" textLength="167.98" lengthAdjust="spacingAndGlyphs">Product Master</text>
<text x="449.05" y="56.00" font-size="24.16" font-weight="bold" fill="#fff" textLength="120.66" lengthAdjust="spacingAndGlyphs">Production</text>
<text x="600.54" y="56.00" font-size="24.16" font-weight="bold" fill="#fff" textLength="104.92" lengthAdjust="spacingAndGlyphs">Inventory</text>
<text x="738.00" y="56.00" font-size="24.16" font-weight="bold" fill="#fff" textLength="34.42" lengthAdjust="spacingAndGlyphs">QA</text>
<text x="803.00" y="56.00" font-size="24.16" font-weight="bold" fill="#fff" textLength="56.39" lengthAdjust="spacingAndGlyphs">Sales</text>
<text x="890.06" y="56.00" font-size="24.16" font-weight="bold" fill="#fff" textLength="96.16" lengthAdjust="spacingAndGlyphs">Planning</text>
<text x="1018.07" y="56.00" font-size="24.16" font-weight="bold" fill="#fff" textLength="62.37" lengthAdjust="spacingAndGlyphs">Labor</text>
<text x="1112.11" y="56.00" font-size="24.16" font-weight="bold" fill="#fff" textLength="94.28" lengthAdjust="spacingAndGlyphs">Logistics</text>
<text x="1238.00" y="56.00" font-size="24.16" font-weight="bold" fill="#fff" textLength="96.71" lengthAdjust="spacingAndGlyphs">Shipping</text>
<text x="1366.08" y="56.00" font-size="24.16" font-weight="bold" fill="#fff" textLength="84.33" lengthAdjust="spacingAndGlyphs">Finance</text>
<text x="1482.06" y="56.00" font-size="24.16" font-weight="bold" fill="#fff" textLength="79.35" lengthAdjust="spacingAndGlyphs">Metrics</text>
<text x="1594.00" y="56.00" font-size="24.16" font-weight="bold" fill="#fff" textLength="79.37" lengthAdjust="spacingAndGlyphs">System</text>
<text x="1733.07" y="54.00" font-size="23.74" font-style="italic" fill="#cfd3d8" textLength="135.11" lengthAdjust="spacingAndGlyphs">Go To Screen</text>
<text x="2223.01" y="58.70" font-size="26.54" fill="#fff" textLength="298.66" lengthAdjust="spacingAndGlyphs">Master Production Schedule</text>
<text x="16.72" y="142.40" font-size="37.71" font-weight="bold" fill="#000" textLength="529.28" lengthAdjust="spacingAndGlyphs">Master Production Schedule</text>
<text x="565.75" y="140.50" font-size="32.12" fill="#fff" textLength="22.32" lengthAdjust="spacingAndGlyphs">?</text>
<text x="2370.68" y="140.40" font-size="27.09" fill="#1a1a1a" textLength="75.31" lengthAdjust="spacingAndGlyphs">Recalc</text>
<text x="2527.07" y="140.40" font-size="27.09" fill="#1a1a1a" textLength="82.75" lengthAdjust="spacingAndGlyphs">Reload</text>
<text x="2691.02" y="140.40" font-size="27.09" fill="#1a1a1a" textLength="88.03" lengthAdjust="spacingAndGlyphs">Publish</text>
<text x="2859.69" y="140.40" font-size="27.09" fill="#1a1a1a" textLength="140.85" lengthAdjust="spacingAndGlyphs">MPS Report</text>
<text x="16.40" y="228.40" font-size="24.30" font-weight="bold" fill="#000" textLength="52.51" lengthAdjust="spacingAndGlyphs">Date</text>
<text x="89.50" y="226.30" font-size="25.00" fill="#333" textLength="121.38" lengthAdjust="spacingAndGlyphs">02/03/2025</text>
<text x="236.53" y="229.90" font-size="18.44" fill="#2a2a2a" textLength="25.98" lengthAdjust="spacingAndGlyphs" stroke="#2a2a2a" stroke-width="0.7">15</text>
<text x="322.00" y="228.40" font-size="24.30" font-weight="bold" fill="#000" textLength="133.32" lengthAdjust="spacingAndGlyphs">Schedule ID</text>
<text x="477.02" y="227.70" font-size="24.02" fill="#222" textLength="320.62" lengthAdjust="spacingAndGlyphs">250203200 : * Auto Generated</text>
<text x="885.65" y="228.40" font-size="24.30" font-weight="bold" fill="#000" textLength="110.15" lengthAdjust="spacingAndGlyphs">Published</text>
<text x="1080.06" y="228.40" font-size="24.30" font-weight="bold" fill="#000" textLength="148.42" lengthAdjust="spacingAndGlyphs">Needs Recalc</text>
<text x="1310.05" y="228.40" font-size="24.30" font-weight="bold" fill="#000" textLength="167.75" lengthAdjust="spacingAndGlyphs">Last Generated</text>
<text x="1788.05" y="228.40" font-size="24.30" font-weight="bold" fill="#000" textLength="244.04" lengthAdjust="spacingAndGlyphs">Container Plan Recalc</text>
<text x="1006.70" y="228.40" font-size="24.30" fill="#333" textLength="32.72" lengthAdjust="spacingAndGlyphs">Yes</text>
<text x="1235.76" y="228.40" font-size="24.30" fill="#333" textLength="34.82" lengthAdjust="spacingAndGlyphs">No</text>
<text x="1489.00" y="228.40" font-size="24.30" fill="#333" textLength="259.61" lengthAdjust="spacingAndGlyphs">02/05/2025 10:50:08 AM</text>
<text x="52.23" y="326.20" font-size="28.77" fill="#545b65" textLength="242.97" lengthAdjust="spacingAndGlyphs" stroke="#545b65" stroke-width="0.9">Schedule Summary</text>
<text x="361.00" y="326.20" font-size="28.77" fill="#545b65" textLength="207.21" lengthAdjust="spacingAndGlyphs" stroke="#545b65" stroke-width="0.9">Troubleshooting</text>
<text x="631.41" y="326.20" font-size="28.77" fill="#545b65" textLength="131.23" lengthAdjust="spacingAndGlyphs" stroke="#545b65" stroke-width="0.9">Issues Log</text>
<text x="1091.35" y="326.20" font-size="28.77" fill="#545b65" textLength="276.53" lengthAdjust="spacingAndGlyphs" stroke="#545b65" stroke-width="0.9">Main Break Segments</text>
<text x="1430.51" y="326.20" font-size="28.77" fill="#545b65" textLength="90.17" lengthAdjust="spacingAndGlyphs" stroke="#545b65" stroke-width="0.9">Credits</text>
<text x="1583.44" y="326.20" font-size="28.77" fill="#545b65" textLength="109.53" lengthAdjust="spacingAndGlyphs" stroke="#545b65" stroke-width="0.9">Scenario</text>
<text x="1755.97" y="326.20" font-size="28.77" fill="#545b65" textLength="85.66" lengthAdjust="spacingAndGlyphs" stroke="#545b65" stroke-width="0.9">Config</text>
<text x="1904.51" y="326.20" font-size="28.77" fill="#545b65" textLength="231.86" lengthAdjust="spacingAndGlyphs" stroke="#545b65" stroke-width="0.9">Chilled Containers</text>
<text x="825.75" y="324.20" font-size="28.77" fill="#2c5d9a" textLength="201.22" lengthAdjust="spacingAndGlyphs" stroke="#2c5d9a" stroke-width="0.9">Hog Availability</text>
<text x="20.95" y="406.00" font-size="29.33" font-weight="bold" fill="#000" textLength="388.38" lengthAdjust="spacingAndGlyphs">Best Available Hog Blocks</text>
<text x="2680.89" y="404.00" font-size="27.23" fill="#111" textLength="82.50" lengthAdjust="spacingAndGlyphs">Reload</text>
<text x="2842.60" y="404.00" font-size="27.23" fill="#111" textLength="158.56" lengthAdjust="spacingAndGlyphs">Toggle Mode</text>
<text x="258.62" y="478.10" font-size="28.63" font-weight="bold" fill="#fff" textLength="116.49" lengthAdjust="spacingAndGlyphs">Monday</text>
<text x="43.85" y="514.70" font-size="24.44" font-weight="bold" fill="#e9e5dc" textLength="125.11" lengthAdjust="spacingAndGlyphs">Cut Date:</text>
<text x="173.13" y="514.70" font-size="24.44" fill="#ebe7de" textLength="158.54" lengthAdjust="spacingAndGlyphs">Feb-03-2025</text>
<text x="148.67" y="551.50" font-size="24.44" fill="#ebe7de" textLength="68.02" lengthAdjust="spacingAndGlyphs">None</text>
<text x="45.00" y="551.50" font-size="24.44" font-weight="bold" fill="#e9e5dc" textLength="97.70" lengthAdjust="spacingAndGlyphs">Source:</text>
<text x="352.43" y="533.30" font-size="23.74" font-weight="bold" fill="#000" textLength="122.94" lengthAdjust="spacingAndGlyphs">Day Total</text>
<text x="494.61" y="531.00" font-size="27.23" fill="#111" textLength="14.98" lengthAdjust="spacingAndGlyphs">0</text>
<text x="303.00" y="614.00" font-size="26.68" font-weight="bold" fill="#000" textLength="159.19" lengthAdjust="spacingAndGlyphs">Shift 1 Total</text>
<text x="480.71" y="609.80" font-size="27.65" fill="#111" textLength="15.21" lengthAdjust="spacingAndGlyphs">0</text>
<text x="303.00" y="1149.70" font-size="26.68" font-weight="bold" fill="#000" textLength="159.19" lengthAdjust="spacingAndGlyphs">Shift 2 Total</text>
<text x="480.71" y="1147.30" font-size="27.65" fill="#111" textLength="15.21" lengthAdjust="spacingAndGlyphs">0</text>
<text x="853.20" y="478.10" font-size="28.63" font-weight="bold" fill="#fff" textLength="111.32" lengthAdjust="spacingAndGlyphs">Tuesday</text>
<text x="634.75" y="514.70" font-size="24.44" font-weight="bold" fill="#e9e5dc" textLength="125.11" lengthAdjust="spacingAndGlyphs">Cut Date:</text>
<text x="764.64" y="514.70" font-size="24.44" fill="#ebe7de" textLength="158.03" lengthAdjust="spacingAndGlyphs">Feb-04-2025</text>
<text x="739.49" y="551.50" font-size="24.44" fill="#ebe7de" textLength="112.76" lengthAdjust="spacingAndGlyphs">Schedule</text>
<text x="635.90" y="551.50" font-size="24.44" font-weight="bold" fill="#e9e5dc" textLength="97.70" lengthAdjust="spacingAndGlyphs">Source:</text>
<text x="943.33" y="533.30" font-size="23.74" font-weight="bold" fill="#000" textLength="122.94" lengthAdjust="spacingAndGlyphs">Day Total</text>
<text x="1086.52" y="531.00" font-size="27.23" fill="#111" textLength="59.62" lengthAdjust="spacingAndGlyphs">7000</text>
<text x="893.90" y="614.00" font-size="26.68" font-weight="bold" fill="#000" textLength="159.19" lengthAdjust="spacingAndGlyphs">Shift 1 Total</text>
<text x="1071.61" y="609.80" font-size="27.65" fill="#111" textLength="61.17" lengthAdjust="spacingAndGlyphs">3500</text>
<text x="803.60" y="682.10" font-size="27.23" fill="#111" textLength="30.40" lengthAdjust="spacingAndGlyphs">JD</text>
<text x="907.11" y="682.10" font-size="27.23" fill="#111" textLength="75.88" lengthAdjust="spacingAndGlyphs">Mixed</text>
<text x="998.30" y="682.10" font-size="27.23" fill="#111" textLength="60.74" lengthAdjust="spacingAndGlyphs">2000</text>
<text x="771.98" y="760.10" font-size="27.23" fill="#111" textLength="62.63" lengthAdjust="spacingAndGlyphs">Herb</text>
<text x="907.11" y="760.10" font-size="27.23" fill="#111" textLength="75.88" lengthAdjust="spacingAndGlyphs">Mixed</text>
<text x="997.26" y="760.10" font-size="27.23" fill="#111" textLength="61.78" lengthAdjust="spacingAndGlyphs">1000</text>
<text x="665.50" y="838.10" font-size="27.23" fill="#111" textLength="169.65" lengthAdjust="spacingAndGlyphs">Non Program</text>
<text x="907.11" y="838.10" font-size="27.23" fill="#111" textLength="75.88" lengthAdjust="spacingAndGlyphs">Mixed</text>
<text x="998.29" y="838.10" font-size="27.23" fill="#111" textLength="45.95" lengthAdjust="spacingAndGlyphs">500</text>
<text x="893.90" y="1149.70" font-size="26.68" font-weight="bold" fill="#000" textLength="159.19" lengthAdjust="spacingAndGlyphs">Shift 2 Total</text>
<text x="1071.61" y="1147.30" font-size="27.65" fill="#111" textLength="61.17" lengthAdjust="spacingAndGlyphs">3500</text>
<text x="803.60" y="1217.80" font-size="27.23" fill="#111" textLength="30.40" lengthAdjust="spacingAndGlyphs">JD</text>
<text x="907.11" y="1217.80" font-size="27.23" fill="#111" textLength="75.88" lengthAdjust="spacingAndGlyphs">Mixed</text>
<text x="998.29" y="1217.80" font-size="27.23" fill="#111" textLength="61.26" lengthAdjust="spacingAndGlyphs">2100</text>
<text x="771.98" y="1295.80" font-size="27.23" fill="#111" textLength="62.63" lengthAdjust="spacingAndGlyphs">Herb</text>
<text x="907.11" y="1295.80" font-size="27.23" fill="#111" textLength="75.88" lengthAdjust="spacingAndGlyphs">Mixed</text>
<text x="998.29" y="1295.80" font-size="27.23" fill="#111" textLength="45.95" lengthAdjust="spacingAndGlyphs">900</text>
<text x="665.50" y="1373.80" font-size="27.23" fill="#111" textLength="169.65" lengthAdjust="spacingAndGlyphs">Non Program</text>
<text x="907.11" y="1373.80" font-size="27.23" fill="#111" textLength="75.88" lengthAdjust="spacingAndGlyphs">Mixed</text>
<text x="998.29" y="1373.80" font-size="27.23" fill="#111" textLength="45.95" lengthAdjust="spacingAndGlyphs">500</text>
<text x="1417.81" y="478.10" font-size="28.63" font-weight="bold" fill="#fff" textLength="162.81" lengthAdjust="spacingAndGlyphs">Wednesday</text>
<text x="1225.65" y="514.70" font-size="24.44" font-weight="bold" fill="#e9e5dc" textLength="125.11" lengthAdjust="spacingAndGlyphs">Cut Date:</text>
<text x="1354.94" y="514.70" font-size="24.44" fill="#ebe7de" textLength="158.28" lengthAdjust="spacingAndGlyphs">Feb-05-2025</text>
<text x="1330.39" y="551.50" font-size="24.44" fill="#ebe7de" textLength="112.76" lengthAdjust="spacingAndGlyphs">Schedule</text>
<text x="1226.80" y="551.50" font-size="24.44" font-weight="bold" fill="#e9e5dc" textLength="97.70" lengthAdjust="spacingAndGlyphs">Source:</text>
<text x="1534.23" y="533.30" font-size="23.74" font-weight="bold" fill="#000" textLength="122.94" lengthAdjust="spacingAndGlyphs">Day Total</text>
<text x="1676.41" y="531.00" font-size="27.23" fill="#111" textLength="59.93" lengthAdjust="spacingAndGlyphs">6990</text>
<text x="1484.80" y="614.00" font-size="26.68" font-weight="bold" fill="#000" textLength="159.19" lengthAdjust="spacingAndGlyphs">Shift 1 Total</text>
<text x="1662.51" y="609.80" font-size="27.65" fill="#111" textLength="60.85" lengthAdjust="spacingAndGlyphs">3490</text>
<text x="1394.50" y="682.10" font-size="27.23" fill="#111" textLength="30.40" lengthAdjust="spacingAndGlyphs">JD</text>
<text x="1498.01" y="682.10" font-size="27.23" fill="#111" textLength="75.88" lengthAdjust="spacingAndGlyphs">Mixed</text>
<text x="1589.20" y="682.10" font-size="27.23" fill="#111" textLength="60.74" lengthAdjust="spacingAndGlyphs">2000</text>
<text x="1362.88" y="760.10" font-size="27.23" fill="#111" textLength="62.63" lengthAdjust="spacingAndGlyphs">Herb</text>
<text x="1498.01" y="760.10" font-size="27.23" fill="#111" textLength="75.88" lengthAdjust="spacingAndGlyphs">Mixed</text>
<text x="1588.16" y="760.10" font-size="27.23" fill="#111" textLength="61.78" lengthAdjust="spacingAndGlyphs">1000</text>
<text x="1256.40" y="838.10" font-size="27.23" fill="#111" textLength="169.65" lengthAdjust="spacingAndGlyphs">Non Program</text>
<text x="1498.01" y="838.10" font-size="27.23" fill="#111" textLength="75.88" lengthAdjust="spacingAndGlyphs">Mixed</text>
<text x="1590.20" y="838.10" font-size="27.23" fill="#111" textLength="45.95" lengthAdjust="spacingAndGlyphs">490</text>
<text x="1484.80" y="1149.70" font-size="26.68" font-weight="bold" fill="#000" textLength="159.19" lengthAdjust="spacingAndGlyphs">Shift 2 Total</text>
<text x="1662.51" y="1147.30" font-size="27.65" fill="#111" textLength="61.17" lengthAdjust="spacingAndGlyphs">3500</text>
<text x="1394.50" y="1217.80" font-size="27.23" fill="#111" textLength="30.40" lengthAdjust="spacingAndGlyphs">JD</text>
<text x="1498.01" y="1217.80" font-size="27.23" fill="#111" textLength="75.88" lengthAdjust="spacingAndGlyphs">Mixed</text>
<text x="1589.19" y="1217.80" font-size="27.23" fill="#111" textLength="61.26" lengthAdjust="spacingAndGlyphs">2020</text>
<text x="1362.88" y="1295.80" font-size="27.23" fill="#111" textLength="62.63" lengthAdjust="spacingAndGlyphs">Herb</text>
<text x="1498.01" y="1295.80" font-size="27.23" fill="#111" textLength="75.88" lengthAdjust="spacingAndGlyphs">Mixed</text>
<text x="1589.19" y="1295.80" font-size="27.23" fill="#111" textLength="45.95" lengthAdjust="spacingAndGlyphs">960</text>
<text x="1256.40" y="1373.80" font-size="27.23" fill="#111" textLength="169.65" lengthAdjust="spacingAndGlyphs">Non Program</text>
<text x="1498.01" y="1373.80" font-size="27.23" fill="#111" textLength="75.88" lengthAdjust="spacingAndGlyphs">Mixed</text>
<text x="1589.19" y="1373.80" font-size="27.23" fill="#111" textLength="45.95" lengthAdjust="spacingAndGlyphs">520</text>
<text x="2023.96" y="478.10" font-size="28.63" font-weight="bold" fill="#fff" textLength="132.30" lengthAdjust="spacingAndGlyphs">Thursday</text>
<text x="1816.55" y="514.70" font-size="24.44" font-weight="bold" fill="#e9e5dc" textLength="125.11" lengthAdjust="spacingAndGlyphs">Cut Date:</text>
<text x="1945.84" y="514.70" font-size="24.44" fill="#ebe7de" textLength="158.28" lengthAdjust="spacingAndGlyphs">Feb-06-2025</text>
<text x="1921.29" y="551.50" font-size="24.44" fill="#ebe7de" textLength="112.76" lengthAdjust="spacingAndGlyphs">Schedule</text>
<text x="1817.70" y="551.50" font-size="24.44" font-weight="bold" fill="#e9e5dc" textLength="97.70" lengthAdjust="spacingAndGlyphs">Source:</text>
<text x="2125.13" y="533.30" font-size="23.74" font-weight="bold" fill="#000" textLength="122.94" lengthAdjust="spacingAndGlyphs">Day Total</text>
<text x="2267.31" y="531.00" font-size="27.23" fill="#111" textLength="59.93" lengthAdjust="spacingAndGlyphs">6977</text>
<text x="2075.70" y="614.00" font-size="26.68" font-weight="bold" fill="#000" textLength="159.19" lengthAdjust="spacingAndGlyphs">Shift 1 Total</text>
<text x="2253.41" y="609.80" font-size="27.65" fill="#111" textLength="60.85" lengthAdjust="spacingAndGlyphs">3497</text>
<text x="1985.40" y="682.10" font-size="27.23" fill="#111" textLength="30.40" lengthAdjust="spacingAndGlyphs">JD</text>
<text x="2088.91" y="682.10" font-size="27.23" fill="#111" textLength="75.88" lengthAdjust="spacingAndGlyphs">Mixed</text>
<text x="2180.09" y="682.10" font-size="27.23" fill="#111" textLength="61.26" lengthAdjust="spacingAndGlyphs">2013</text>
<text x="1953.78" y="760.10" font-size="27.23" fill="#111" textLength="62.63" lengthAdjust="spacingAndGlyphs">Herb</text>
<text x="2088.91" y="760.10" font-size="27.23" fill="#111" textLength="75.88" lengthAdjust="spacingAndGlyphs">Mixed</text>
<text x="2180.09" y="760.10" font-size="27.23" fill="#111" textLength="45.95" lengthAdjust="spacingAndGlyphs">984</text>
<text x="1847.30" y="838.10" font-size="27.23" fill="#111" textLength="169.65" lengthAdjust="spacingAndGlyphs">Non Program</text>
<text x="2088.91" y="838.10" font-size="27.23" fill="#111" textLength="75.88" lengthAdjust="spacingAndGlyphs">Mixed</text>
<text x="2180.09" y="838.10" font-size="27.23" fill="#111" textLength="45.95" lengthAdjust="spacingAndGlyphs">500</text>
<text x="2075.70" y="1149.70" font-size="26.68" font-weight="bold" fill="#000" textLength="159.19" lengthAdjust="spacingAndGlyphs">Shift 2 Total</text>
<text x="2253.41" y="1147.30" font-size="27.65" fill="#111" textLength="60.85" lengthAdjust="spacingAndGlyphs">3480</text>
<text x="1985.40" y="1217.80" font-size="27.23" fill="#111" textLength="30.40" lengthAdjust="spacingAndGlyphs">JD</text>
<text x="2088.91" y="1217.80" font-size="27.23" fill="#111" textLength="75.88" lengthAdjust="spacingAndGlyphs">Mixed</text>
<text x="2180.10" y="1217.80" font-size="27.23" fill="#111" textLength="60.74" lengthAdjust="spacingAndGlyphs">2000</text>
<text x="1953.78" y="1295.80" font-size="27.23" fill="#111" textLength="62.63" lengthAdjust="spacingAndGlyphs">Herb</text>
<text x="2088.91" y="1295.80" font-size="27.23" fill="#111" textLength="75.88" lengthAdjust="spacingAndGlyphs">Mixed</text>
<text x="2180.09" y="1295.80" font-size="27.23" fill="#111" textLength="45.95" lengthAdjust="spacingAndGlyphs">940</text>
<text x="1847.30" y="1373.80" font-size="27.23" fill="#111" textLength="169.65" lengthAdjust="spacingAndGlyphs">Non Program</text>
<text x="2088.91" y="1373.80" font-size="27.23" fill="#111" textLength="75.88" lengthAdjust="spacingAndGlyphs">Mixed</text>
<text x="2180.09" y="1373.80" font-size="27.23" fill="#111" textLength="45.95" lengthAdjust="spacingAndGlyphs">540</text>
<text x="2636.39" y="478.10" font-size="28.63" font-weight="bold" fill="#fff" textLength="88.21" lengthAdjust="spacingAndGlyphs">Friday</text>
<text x="2407.45" y="514.70" font-size="24.44" font-weight="bold" fill="#e9e5dc" textLength="125.11" lengthAdjust="spacingAndGlyphs">Cut Date:</text>
<text x="2536.74" y="514.70" font-size="24.44" fill="#ebe7de" textLength="158.28" lengthAdjust="spacingAndGlyphs">Feb-07-2025</text>
<text x="2512.19" y="551.50" font-size="24.44" fill="#ebe7de" textLength="112.76" lengthAdjust="spacingAndGlyphs">Schedule</text>
<text x="2408.60" y="551.50" font-size="24.44" font-weight="bold" fill="#e9e5dc" textLength="97.70" lengthAdjust="spacingAndGlyphs">Source:</text>
<text x="2716.03" y="533.30" font-size="23.74" font-weight="bold" fill="#000" textLength="122.94" lengthAdjust="spacingAndGlyphs">Day Total</text>
<text x="2858.22" y="531.00" font-size="27.23" fill="#111" textLength="59.62" lengthAdjust="spacingAndGlyphs">7000</text>
<text x="2666.60" y="614.00" font-size="26.68" font-weight="bold" fill="#000" textLength="159.19" lengthAdjust="spacingAndGlyphs">Shift 1 Total</text>
<text x="2844.31" y="609.80" font-size="27.65" fill="#111" textLength="61.17" lengthAdjust="spacingAndGlyphs">3500</text>
<text x="2576.30" y="682.10" font-size="27.23" fill="#111" textLength="30.40" lengthAdjust="spacingAndGlyphs">JD</text>
<text x="2679.81" y="682.10" font-size="27.23" fill="#111" textLength="75.88" lengthAdjust="spacingAndGlyphs">Mixed</text>
<text x="2771.00" y="682.10" font-size="27.23" fill="#111" textLength="60.74" lengthAdjust="spacingAndGlyphs">2000</text>
<text x="2544.68" y="760.10" font-size="27.23" fill="#111" textLength="62.63" lengthAdjust="spacingAndGlyphs">Herb</text>
<text x="2679.81" y="760.10" font-size="27.23" fill="#111" textLength="75.88" lengthAdjust="spacingAndGlyphs">Mixed</text>
<text x="2769.96" y="760.10" font-size="27.23" fill="#111" textLength="61.78" lengthAdjust="spacingAndGlyphs">1000</text>
<text x="2438.20" y="838.10" font-size="27.23" fill="#111" textLength="169.65" lengthAdjust="spacingAndGlyphs">Non Program</text>
<text x="2679.81" y="838.10" font-size="27.23" fill="#111" textLength="75.88" lengthAdjust="spacingAndGlyphs">Mixed</text>
<text x="2770.99" y="838.10" font-size="27.23" fill="#111" textLength="45.95" lengthAdjust="spacingAndGlyphs">500</text>
<text x="2666.60" y="1149.70" font-size="26.68" font-weight="bold" fill="#000" textLength="159.19" lengthAdjust="spacingAndGlyphs">Shift 2 Total</text>
<text x="2844.31" y="1147.30" font-size="27.65" fill="#111" textLength="61.17" lengthAdjust="spacingAndGlyphs">3500</text>
<text x="2576.30" y="1217.80" font-size="27.23" fill="#111" textLength="30.40" lengthAdjust="spacingAndGlyphs">JD</text>
<text x="2679.81" y="1217.80" font-size="27.23" fill="#111" textLength="75.88" lengthAdjust="spacingAndGlyphs">Mixed</text>
<text x="2771.00" y="1217.80" font-size="27.23" fill="#111" textLength="60.74" lengthAdjust="spacingAndGlyphs">2000</text>
<text x="2544.68" y="1295.80" font-size="27.23" fill="#111" textLength="62.63" lengthAdjust="spacingAndGlyphs">Herb</text>
<text x="2679.81" y="1295.80" font-size="27.23" fill="#111" textLength="75.88" lengthAdjust="spacingAndGlyphs">Mixed</text>
<text x="2770.99" y="1295.80" font-size="27.23" fill="#111" textLength="45.95" lengthAdjust="spacingAndGlyphs">998</text>
<text x="2438.20" y="1373.80" font-size="27.23" fill="#111" textLength="169.65" lengthAdjust="spacingAndGlyphs">Non Program</text>
<text x="2679.81" y="1373.80" font-size="27.23" fill="#111" textLength="75.88" lengthAdjust="spacingAndGlyphs">Mixed</text>
<text x="2770.99" y="1373.80" font-size="27.23" fill="#111" textLength="45.95" lengthAdjust="spacingAndGlyphs">502</text>
</svg>
</body></html>
